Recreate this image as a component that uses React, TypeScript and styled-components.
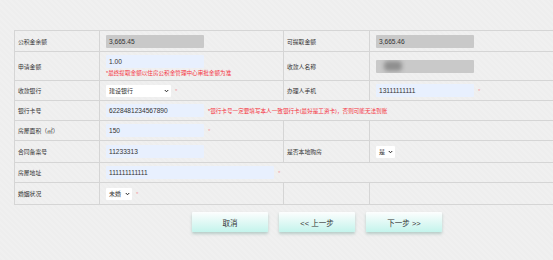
import React, { FC, ReactNode } from 'react';
import styled, { createGlobalStyle, css } from 'styled-components';

const borderColor = '#d5d5d5';
const noteRed = '#f5333f';
const starColor = '#f39a9f';
const fontStack = `"Liberation Sans", "Noto Sans CJK SC", sans-serif`;

const GlobalStyle = createGlobalStyle`
  html, body {
    margin: 0;
    padding: 0;
    background: #efefef;
    overflow: hidden;
  }
  body {
    font-family: ${fontStack};
    color: #333;
  }
`;

const Page = styled.div`
  width: 553px;
  height: 260px;
  padding: 30px 0 0 14px;
  box-sizing: border-box;
  background: repeating-linear-gradient(45deg, #eeeeee 0, #eeeeee 2px, #f0f0f0 2px, #f0f0f0 4px);
`;

const FormGrid = styled.div`
  width: 545px;
  display: grid;
  grid-template-columns: 85px 184px 86px 1fr;
  border-top: 1px solid ${borderColor};
  border-left: 1px solid ${borderColor};
`;

const Cell = styled.div<{ $span?: number; $h: number; $label?: boolean }>`
  height: ${p => p.$h}px;
  box-sizing: border-box;
  border-right: 1px solid ${borderColor};
  border-bottom: 1px solid ${borderColor};
  display: flex;
  align-items: center;
  gap: 4px;
  padding-left: ${p => (p.$label ? 3 : 6)}px;
  font-size: 5.8px;
  color: #333;
  ${p => p.$span && css`grid-column: span ${p.$span};`}
`;

const Stack = styled.div`
  display: flex;
  flex-direction: column;
  gap: 1px;
`;

const inputBase = css`
  height: 13px;
  box-sizing: border-box;
  padding-left: 3px;
  display: flex;
  align-items: center;
  font-size: 6.6px;
  color: #333;
  border-radius: 1px;
`;

const Field = styled.div<{ $w?: number; $readonly?: boolean }>`
  ${inputBase};
  width: ${p => p.$w ?? 98}px;
  background: ${p => (p.$readonly ? '#c9c9c9' : '#e8f0fe')};
  position: relative;
  overflow: hidden;
`;

const Blurred = styled.div`
  position: absolute;
  left: 8px;
  top: 1px;
  width: 18px;
  height: 10px;
  background: #8f8f8f;
  border-radius: 4px;
  filter: blur(2px);
`;

const SelectBox = styled.div<{ $w: number }>`
  ${inputBase};
  width: ${p => p.$w}px;
  height: 12px;
  background: #fff;
  justify-content: space-between;
  padding-right: 2px;
  font-size: 6px;
`;

const Star = styled.span`
  color: ${starColor};
  font-size: 6px;
`;

const Note = styled.span`
  color: ${noteRed};
  font-size: 5.6px;
  white-space: nowrap;
`;

const ButtonRow = styled.div`
  display: flex;
  gap: 11px;
  padding: 7px 0 0 178px;
`;

const StepButton = styled.button`
  width: 76px;
  height: 20px;
  border: none;
  border-radius: 1px;
  background: linear-gradient(#fdfefe, #c4f4ec);
  box-shadow: 0 2px 3px rgba(80, 140, 130, 0.35);
  font-family: ${fontStack};
  font-size: 7.5px;
  color: #333;
  padding: 0;
`;

const Chevron: FC = () => (
  <svg width="5" height="4" viewBox="0 0 10 7">
    <path d="M1.5 1.5 L5 5 L8.5 1.5" fill="none" stroke="#222" strokeWidth="2" />
  </svg>
);

const Select: FC<{ w: number; children: ReactNode }> = ({ w, children }) => (
  <SelectBox $w={w}>
    <span>{children}</span>
    <Chevron />
  </SelectBox>
);

const App: FC = () => (
  <>
    <GlobalStyle />
    <Page>
      <FormGrid>
        <Cell $h={21} $label>公积金余额</Cell>
        <Cell $h={21}><Field $readonly>3,665.45</Field></Cell>
        <Cell $h={21} $label>可提取金额</Cell>
        <Cell $h={21}><Field $readonly>3,665.46</Field></Cell>

        <Cell $h={29} $label>申请金额</Cell>
        <Cell $h={29}>
          <Stack>
            <Field>1.00</Field>
            <Note>*最终提取金额以住房公积金管理中心审批金额为准</Note>
          </Stack>
        </Cell>
        <Cell $h={29} $label>收款人名称</Cell>
        <Cell $h={29}><Field $readonly><Blurred /></Field></Cell>

        <Cell $h={20} $label>收款银行</Cell>
        <Cell $h={20}><Select w={65}>建设银行</Select><Star>*</Star></Cell>
        <Cell $h={20} $label>办理人手机</Cell>
        <Cell $h={20}><Field>13111111111</Field><Star>*</Star></Cell>

        <Cell $h={20} $label>银行卡号</Cell>
        <Cell $h={20} $span={3}>
          <Field>6228481234567890</Field>
          <Note>*银行卡号一定要填写本人一致银行卡(最好是工资卡)，否则可能无法到账</Note>
        </Cell>

        <Cell $h={20} $label>房屋面积（㎡）</Cell>
        <Cell $h={20}><Field>150</Field><Star>*</Star></Cell>
        <Cell $h={20} />
        <Cell $h={20} />

        <Cell $h={22} $label>合同备案号</Cell>
        <Cell $h={22}><Field>11233313</Field></Cell>
        <Cell $h={22} $label>是否本地购房</Cell>
        <Cell $h={22}><Select w={19}>是</Select></Cell>

        <Cell $h={20} $label>房屋地址</Cell>
        <Cell $h={20} $span={3}><Field $w={168}>111111111111</Field><Star>*</Star></Cell>

        <Cell $h={22} $label>婚姻状况</Cell>
        <Cell $h={22}><Select w={26}>未婚</Select><Star>*</Star></Cell>
        <Cell $h={22} />
        <Cell $h={22} />
      </FormGrid>
      <ButtonRow>
        <StepButton>取消</StepButton>
        <StepButton>&lt;&lt; 上一步</StepButton>
        <StepButton>下一步 &gt;&gt;</StepButton>
      </ButtonRow>
    </Page>
  </>
);

export default App;
